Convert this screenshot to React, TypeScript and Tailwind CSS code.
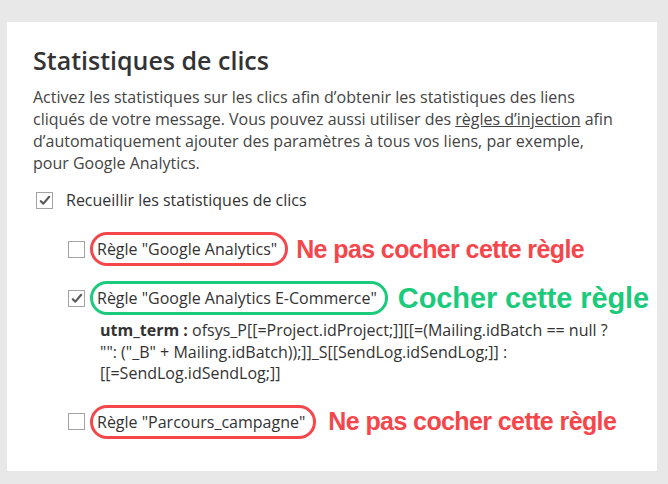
import React from 'react';

const sans = { fontFamily: '"Open Sans", "Noto Sans", sans-serif' };
const arial = { fontFamily: '"Liberation Sans", Arial, sans-serif' };

function Box({ checked }: { checked?: boolean }) {
  return (
    <span className="flex h-[17px] w-[17px] shrink-0 items-center justify-center border border-[#a3a3a3] bg-white">
      {checked && (
        <svg width="12" height="11" viewBox="0 0 12 11">
          <path d="M1.8 6.2 L4.4 8.6 L10.2 1.8" fill="none" stroke="#5a5a5a" strokeWidth="2.2" strokeLinecap="round" strokeLinejoin="round" />
        </svg>
      )}
    </span>
  );
}

function Rule({
  label,
  checked,
  ring,
  note,
  noteClass,
  gap,
}: {
  label: string;
  checked?: boolean;
  ring: string;
  note: string;
  noteClass: string;
  gap: string;
}) {
  return (
    <div className="flex h-[34px] items-center">
      <Box checked={checked} />
      <span className={`ml-[5px] flex h-[34px] items-center rounded-full border-[3px] pl-[4px] pr-[8px] text-[16px] text-[#333] ${ring}`}>
        {label}
      </span>
      <span className={`${gap} font-bold leading-none ${noteClass}`} style={arial}>
        {note}
      </span>
    </div>
  );
}

export default function App() {
  return (
    <div className="h-[484px] w-[668px] bg-[#e8e8e8] pl-[7px] pt-[22px]" style={sans}>
      <div className="h-[449px] w-[650px] bg-white pl-[26px] pt-[22px] text-[#444]">
        <h1 className="text-[25px] font-semibold leading-[32px] text-[#333]">Statistiques de clics</h1>
        <p className="mt-[10px] w-[590px] text-[16px] leading-[22px]">
          Activez les statistiques sur les clics afin d’obtenir les statistiques des liens cliqués de votre message. Vous pouvez aussi utiliser des{' '}
          <span className="underline">règles d’injection</span> afin d’automatiquement ajouter des paramètres à tous vos liens, par exemple, pour Google Analytics.
        </p>

        <div className="ml-[3px] mt-[15px] flex h-[22px] items-center">
          <Box checked />
          <span className="ml-[13px] text-[16px] text-[#333]">Recueillir les statistiques de clics</span>
        </div>

        <div className="ml-[35px]">
          <div className="mt-[21px]">
            <Rule
              label={'Règle "Google Analytics"'}
              ring="border-[#f5474b]"
              note="Ne pas cocher cette règle"
              noteClass="text-[25px] tracking-[-0.6px] text-[#f5474b]"
              gap="ml-[8px]"
            />
          </div>
          <div className="mt-[15px]">
            <Rule
              label={'Règle "Google Analytics E-Commerce"'}
              checked
              ring="border-[#1bca7b]"
              note="Cocher cette règle"
              noteClass="text-[29px] tracking-[-0.1px] text-[#1bca7b]"
              gap="ml-[10px]"
            />
          </div>
          <p className="ml-[32px] mt-[5px] w-[520px] text-[16px] leading-[21.5px] text-[#333]">
            <b className="font-bold">utm_term :</b> ofsys_P[[=Project.idProject;]][[=(Mailing.idBatch == null ? "": ("_B" + Mailing.idBatch));]]_S[[SendLog.idSendLog;]] : [[=SendLog.idSendLog;]]
          </p>
          <div className="mt-[20px]">
            <Rule
              label={'Règle "Parcours_campagne"'}
              ring="border-[#f5474b]"
              note="Ne pas cocher cette règle"
              noteClass="text-[25px] tracking-[-0.6px] text-[#f5474b]"
              gap="ml-[12px]"
            />
          </div>
        </div>
      </div>
    </div>
  );
}
